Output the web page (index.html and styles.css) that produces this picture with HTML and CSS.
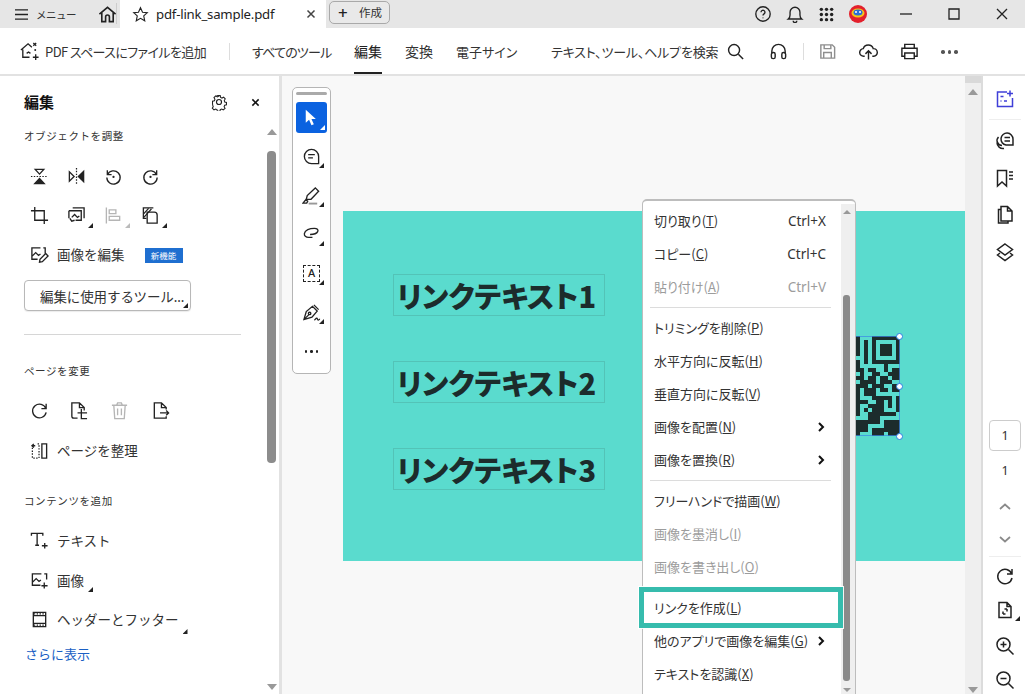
FILE: index.html
```html
<!DOCTYPE html>
<html lang="ja">
<head>
<meta charset="utf-8">
<title>pdf-link_sample.pdf</title>
<link rel="stylesheet" href="styles.css">
</head>
<body>
<div class="app">
  <header class="titlebar">
    <div class="tb-left">
      <svg class="ic menu-ic" viewBox="0 0 16 14"><path d="M1 2h14M1 7h14M1 12h14"/></svg>
      <span class="menu-label">メニュー</span>
      <svg class="ic home-ic" viewBox="0 0 20 20"><path d="M1.500 9.500 10 2.500l8.500 7M4 8v9.500h4v-5a2 2 0 0 1 4 0v5h4V8" /></svg>
    </div>
    <div class="tab">
      <svg class="ic star-ic" viewBox="0 0 20 20"><path d="m10 2 2.400 5.300 5.600.6-4.200 3.800 1.200 5.700L10 14.500l-5 2.900 1.200-5.700L2 7.900l5.600-.6z"/></svg>
      <span class="tab-name">pdf-link_sample.pdf</span>
      <svg class="ic tab-x" viewBox="0 0 10 10"><path d="m1.500 1.500 7 7m0-7-7 7"/></svg>
    </div>
    <div class="create"><span class="plus">+</span><span>作成</span></div>
    <div class="tb-right">
      <svg class="ic tr-ic" viewBox="0 0 20 20"><circle cx="10" cy="10" r="8"/><path d="M7.800 8a2.200 2.200 0 1 1 3.400 1.900c-.8.5-1.200 1-1.200 1.800"/><circle class="dot" cx="10" cy="14.300" r=".6"/></svg>
      <svg class="ic tr-ic" viewBox="0 0 20 20"><path d="M2.500 15.500c1.500-1.200 2-2.500 2-4.500V8a5.500 5.500 0 0 1 11 0v3c0 2 .5 3.300 2 4.500zM8 17.500a2 2 0 0 0 4 0"/></svg>
      <svg class="grid-ic" viewBox="0 0 16 16"><g><circle cx="2.500" cy="2.500" r="1.800"/><circle cx="8" cy="2.500" r="1.800"/><circle cx="13.500" cy="2.500" r="1.800"/><circle cx="2.500" cy="8" r="1.800"/><circle cx="8" cy="8" r="1.800"/><circle cx="13.500" cy="8" r="1.800"/><circle cx="2.500" cy="13.500" r="1.800"/><circle cx="8" cy="13.500" r="1.800"/><circle cx="13.500" cy="13.500" r="1.800"/></g></svg>
      <svg class="avatar" viewBox="0 0 18 18"><circle cx="9" cy="9" r="9" fill="#e3202c"/><ellipse cx="9" cy="8" rx="6.500" ry="4.500" fill="#f5c518"/><ellipse cx="9" cy="7.500" rx="4.500" ry="3" fill="#2a6fd6"/><circle cx="7" cy="7" r="1" fill="#fff"/><circle cx="11" cy="7" r="1" fill="#fff"/></svg>
    </div>
    <div class="win">
      <svg class="ic win-ic" viewBox="0 0 14 14"><path d="M1 7h12"/></svg>
      <svg class="ic win-ic" viewBox="0 0 14 14"><path d="M2 2h10v10H2z"/></svg>
      <svg class="ic win-ic" viewBox="0 0 14 14"><path d="m2 2 10 10m0-10L2 12"/></svg>
    </div>
  </header>

  <nav class="toolbar">
    <svg class="ic add-ic" viewBox="0 0 22 22"><path d="M2 9.500 9.500 3l4 3.500M4 9v8h7M8 13l2-1.500 2 1.500"/><path d="M15 2l1.500 1.500L15 5M18 2l-1.500 1.500L18 5M17.500 14v6M14.500 17h6"/><circle class="dot" cx="17" cy="9.500" r="1"/></svg>
    <span class="tool add-text">PDF スペースにファイルを追加</span>
    <span class="vsep first"></span>
    <span class="tool all">すべてのツール</span>
    <span class="tool tab-edit">編集</span>
    <span class="tool convert">変換</span>
    <span class="tool sign">電子サイン</span>
    <span class="tool search">テキスト、ツール、ヘルプを検索</span>
    <svg class="ic t-ic s-search" viewBox="0 0 20 20"><circle cx="8.500" cy="8.500" r="5.800"/><path d="m13 13 5 5"/></svg>
    <svg class="ic t-ic s-head" viewBox="0 0 20 20"><path d="M3 12V9.500a7 7 0 0 1 14 0V12"/><rect x="2.500" y="11" width="4" height="6.500" rx="1.800"/><rect x="13.500" y="11" width="4" height="6.500" rx="1.800"/></svg>
    <span class="vsep second"></span>
    <svg class="ic t-ic s-save" viewBox="0 0 20 20"><path d="M3 3h12l2.500 2.500V17H3zM6.500 3v4h7V3M6 17v-6h8v6"/></svg>
    <svg class="ic t-ic s-up" viewBox="0 0 20 20"><path d="M6 15H5a4 4 0 0 1-.5-8A5.500 5.500 0 0 1 15 7a4 4 0 0 1 .5 8H14M10 18.500V9.500M6.800 12.500 10 9.300l3.200 3.200"/></svg>
    <svg class="ic t-ic s-print" viewBox="0 0 20 20"><path d="M5 6V2.500h10V6M5 15H2V6.500h16V15h-3M5 11.500h10v6H5z"/></svg>
    <span class="more-dots s-more"><i></i><i></i><i></i></span>
  </nav>

  <main class="main">
    <aside class="panel">
      <div class="panel-body">
        <div class="panel-head">
          <h1 class="panel-title">編集</h1>
          <svg class="ic gear" viewBox="0 0 20 20"><circle cx="10" cy="10" r="2.800"/><path d="M8.500 2h3l.5 2.300 1.700.8 2-1.200 2 2.300-1.200 2 .6 1.800 2.100.6v2.800l-2.200.6-.7 1.800 1.200 2-2.200 2-2-1.200-1.700.7-.5 2.300h-3l-.6-2.300-1.700-.7-2 1.200-2.100-2.100 1.200-2-.7-1.700L2 11.800V9l2.300-.6.700-1.800-1.200-2 2.100-2.200 2 1.200 1.700-.8z" transform="translate(1 1) scale(.9)"/></svg>
          <svg class="ic close-x" viewBox="0 0 10 10"><path d="m1.500 1.500 7 7m0-7-7 7"/></svg>
        </div>

        <h2 class="sec-title obj">オブジェクトを調整</h2>
        <div class="icon-row r1">
          <span class="cell"><svg class="ic" viewBox="0 0 20 20"><path d="M5.500 2.500h9L10 7.500z"/><path class="fill" d="M5 17.500h10L10 12z"/><path class="dash" d="M1 10h18"/></svg></span>
          <span class="cell"><svg class="ic" viewBox="0 0 20 20"><path d="M2.500 5v10L7.500 10z"/><path class="fill" d="M17.500 4.500v11L12 10z"/><path class="dash" d="M10 1v18"/></svg></span>
          <span class="cell"><svg class="ic" viewBox="0 0 20 20"><path d="M3.500 3.500v4.500H8M3.700 8A7 7 0 1 1 3 11"/><circle class="dot" cx="10" cy="10.500" r="1.200"/></svg></span>
          <span class="cell"><svg class="ic" viewBox="0 0 20 20"><path d="M16.500 3.500v4.500H12M16.300 8A7 7 0 1 0 17 11"/><circle class="dot" cx="10" cy="10.500" r="1.200"/></svg></span>
        </div>
        <div class="icon-row r2">
          <span class="cell"><svg class="ic" viewBox="0 0 20 20"><path d="M5 1v14h14M1 5h14v14"/></svg></span>
          <span class="cell tri"><svg class="ic" viewBox="0 0 20 20"><path d="M6 2h12v11M2 5h13v10H9"/><path d="M2 5v8m3-1 3-3 3 3 2-1.500M3 13l2 3 3-1"/></svg></span>
          <span class="cell tri off"><svg class="ic" viewBox="0 0 20 20"><path d="M2.500 1.500v17M5.500 4h7v4h-7zM5.500 11h11v4h-11z"/></svg></span>
          <span class="cell tri"><svg class="ic" viewBox="0 0 20 20"><path d="M13 2H2.500v11h3M6.500 6.500H14a3 3 0 0 1 3 3V18H6.500z"/><path d="m3 8 5-5.500M3 12l8-9"/></svg></span>
        </div>
        <div class="text-row edit-row">
          <span class="cell"><svg class="ic" viewBox="0 0 20 20"><path d="M11 3H2v12h6m8-6V3h-2M2 12l4-4 3 3 2-1.500"/><path d="m10 18 .5-3 6-6 2.500 2.500-6 6z"/></svg></span>
          <span class="row-label">画像を編集</span>
          <span class="badge">新機能</span>
        </div>
        <button class="tool-btn">編集に使用するツール...</button>
        <hr class="rule">

        <h2 class="sec-title pg">ページを変更</h2>
        <div class="icon-row r3">
          <span class="cell"><svg class="ic" viewBox="0 0 20 20"><path d="M17 3v5h-5M16.700 8A7.200 7.200 0 1 0 17 12"/></svg></span>
          <span class="cell wide"><svg class="ic" viewBox="0 0 20 20"><path d="M9 18H5a2 2 0 0 1-2-2V2h8l5 5v3M11 2v5h5M9 12.500h10M13 8.500v10h6"/></svg></span>
          <span class="cell wide off"><svg class="ic" viewBox="0 0 20 20"><path d="M2 4.500h16M7 4.500 8 2h4l1 2.500M4 4.500 5 18.500h10l1-14M8 8v7M12 8v7"/></svg></span>
          <span class="cell wide"><svg class="ic" viewBox="0 0 20 20"><path d="M16 9V7l-5-5H3.500v16H16v-2M11 2v5h5M9.500 12.500h9M16 10l2.500 2.500L16 15"/></svg></span>
        </div>
        <div class="text-row org-row">
          <span class="cell"><svg class="ic" viewBox="0 0 20 20"><path class="dash" d="M2.500 7v11h7V3H7"/><path d="M12.500 3h5v15h-5zM2 5h3.500M4 3 2 5l2 2"/></svg></span>
          <span class="row-label">ページを整理</span>
        </div>

        <h2 class="sec-title add">コンテンツを追加</h2>
        <div class="text-row add-r1">
          <span class="cell"><svg class="ic" viewBox="0 0 20 20"><path d="M1.500 5V2.500h12V5M7.500 2.500V15M5.500 15h4M15.500 12.500v6M12.500 15.500h6"/></svg></span>
          <span class="row-label">テキスト</span>
        </div>
        <div class="text-row add-r2">
          <span class="cell"><svg class="ic" viewBox="0 0 20 20"><path d="M12 3H2.500v12H11M15 3h2.500v6M2.500 12l4-4 3 3 2-1.500M15 12v6.500M12 15.500h6.500"/></svg></span>
          <span class="row-label tri-label">画像</span>
        </div>
        <div class="text-row add-r3">
          <span class="cell"><svg class="ic" viewBox="0 0 20 20"><path d="M3.500 2.500h13v15h-13zM3.500 6h13M3.500 14h13"/><path class="dash" d="M4 4.200h12M4 15.800h12"/></svg></span>
          <span class="row-label tri-label long">ヘッダーとフッター</span>
        </div>
        <a class="more-link">さらに表示</a>
      </div>
      <div class="p-scroll">
        <span class="arrow-up"></span>
        <span class="p-thumb"></span>
        <span class="arrow-down"></span>
      </div>
    </aside>

    <section class="canvas">
      <div class="float-bar">
        <span class="grip"></span>
        <span class="fb selected tri-w"><svg viewBox="0 0 16 16" class="cursor"><path d="M4 1.500v11l2.800-2.600 2 4.600 2-.9-2-4.400h3.700z"/></svg></span>
        <span class="fb tri"><svg class="ic" viewBox="0 0 20 20"><path d="M17.500 17.500H10a7.500 7.500 0 1 1 7.500-7.500zM6.500 8h7M6.500 11.500h5"/></svg></span>
        <span class="fb tri"><svg class="ic" viewBox="0 0 20 20"><path d="m4.500 14 1-4L14 2l3.500 3.500-8 8.500zM1 18l3-3.500 2 1.500-1 2z"/><path class="soft" d="M7 18.500h9"/></svg></span>
        <span class="fb tri"><svg class="ic" viewBox="0 0 20 20"><path d="M11 13H7c-3 0-4.800-1.500-4.500-4C3 5.500 8 3.500 13 3.500c3 0 4.500 1.500 3.500 3.500-1 2-4 3-8 3"/></svg></span>
        <span class="fb tri"><span class="a-box">A</span></span>
        <span class="fb tri"><svg class="ic" viewBox="0 0 20 20"><path d="M2 17.500 4.500 9 11 3.500l5 5L10.500 15zM2 17.500l5-5M12.500 2l5 5M13 18c1-.5 1.500-2 2.500-2s.5 2 1.500 2 1-1 2-1"/><circle cx="8" cy="11" r="1.300"/></svg></span>
        <span class="fb"><span class="more-dots small"><i></i><i></i><i></i></span></span>
      </div>

      <div class="page">
        <div class="link-box"><span>リンクテキスト1</span></div>
        <div class="link-box"><span>リンクテキスト2</span></div>
        <div class="link-box"><span>リンクテキスト3</span></div>
        <svg class="qr" viewBox="0 0 25 25" shape-rendering="crispEdges"><path d="M14 0h1v5h-1zM16 1h1v6h-1zM18 0h7v7h-7zM19 1v5h5V1zM20 2h3v3h-3zM14 6h1v2h-1zM14 8h2v1h-2zM17 8h2v1h-2zM21 7h1v2h-1zM23 8h2v1h-2zM15 9h1v3h-1zM18 9h2v1h-2zM22 9h3v1h-3zM14 10h1v1h-1zM17 10h2v2h-2zM20 10h2v1h-2zM23 10h2v1h-2zM16 11h1v1h-1zM20 11h3v1h-3zM14 12h3v1h-3zM18 12h3v1h-3zM23 12h2v2h-2zM14 13h1v2h-1zM16 13h3v2h-3zM20 13h2v1h-2zM18 15h5v1h-5zM14 15h1v1h-1zM14 16h3v5h-3zM15 17v3h4v-3zM16 18h2v1h-2zM19 16h2v3h-2zM22 16h1v2h-1zM24 15h1v4h-1zM19 19h5v1h-5zM14 20h6v2h-6zM21 21h4v3h-4zM14 22h3v2h-3zM18 23h3v2h-3zM14 24h1v1h-1zM22 24h3v1h-3z" fill-rule="evenodd"/></svg>
        <span class="qr-sel"></span>
        <span class="handle h1"></span>
        <span class="handle h2"></span>
        <span class="handle h3"></span>
      </div>

      <div class="c-scroll">
        <span class="c-thumb"></span>
        <span class="arrow-up"></span>
        <span class="arrow-down"></span>
      </div>

      <div class="ctx">
        <div class="ctx-list">
          <div class="mi"><span>切り取り(<u>T</u>)</span><span class="key">Ctrl+X</span></div>
          <div class="mi"><span>コピー(<u>C</u>)</span><span class="key">Ctrl+C</span></div>
          <div class="mi dis"><span>貼り付け(<u>A</u>)</span><span class="key">Ctrl+V</span></div>
          <hr class="msep">
          <div class="mi"><span>トリミングを削除(<u>P</u>)</span></div>
          <div class="mi"><span>水平方向に反転(<u>H</u>)</span></div>
          <div class="mi"><span>垂直方向に反転(<u>V</u>)</span></div>
          <div class="mi"><span>画像を配置(<u>N</u>)</span><svg class="chev" viewBox="0 0 8 12"><path d="m2 2 4 4-4 4"/></svg></div>
          <div class="mi"><span>画像を置換(<u>R</u>)</span><svg class="chev" viewBox="0 0 8 12"><path d="m2 2 4 4-4 4"/></svg></div>
          <hr class="msep">
          <div class="mi"><span>フリーハンドで描画(<u>W</u>)</span></div>
          <div class="mi dis"><span>画像を墨消し(<u>I</u>)</span></div>
          <div class="mi dis"><span>画像を書き出し(<u>O</u>)</span></div>
          <hr class="msep">
          <div class="mi"><span>リンクを作成(<u>L</u>)</span></div>
          <div class="mi"><span>他のアプリで画像を編集(<u>G</u>)</span><svg class="chev" viewBox="0 0 8 12"><path d="m2 2 4 4-4 4"/></svg></div>
          <div class="mi"><span>テキストを認識(<u>X</u>)</span></div>
        </div>
        <div class="ctx-scroll">
          <span class="arrow-up small"></span>
          <span class="ctx-thumb"></span>
          <span class="arrow-down small"></span>
        </div>
      </div>
      <div class="callout"></div>
    </section>

    <aside class="rail">
      <svg class="ic rail-ic active" viewBox="0 0 20 20"><path d="M12 3H2.500v14.500h15V9"/><path d="M5.500 7.500h3M5.500 12h1M9 12h3"/><path d="M15 1.500v6M12 4.500h6" /></svg>
      <span class="rail-sep"></span>
      <svg class="ic rail-ic" viewBox="0 0 20 20"><path d="M18 14h-7a6 6 0 1 1 7-6zM7 14.500A5 5 0 0 1 3.500 6M9 17.500a6 6 0 0 1-7-6M9.500 6.500H15M9.500 10H15"/></svg>
      <svg class="ic rail-ic" viewBox="0 0 20 20"><path d="M2.500 2.500h9V18L7 14l-4.500 4zM14 4h4M14 7.500h4M14 11h4"/></svg>
      <svg class="ic rail-ic" viewBox="0 0 20 20"><path d="M6 4.500H3.500v13.500H13v-2M6 1.500h6.500l4.500 4.500v10H6zM12.500 1.500V6H17"/></svg>
      <svg class="ic rail-ic" viewBox="0 0 20 20"><path d="m10 2 7.500 5.500L10 13 2.500 7.500zM5 11l-2.500 2L10 18.500l7.500-5.500L15 11"/></svg>
      <span class="rail-gap"></span>
      <span class="page-input">1</span>
      <span class="page-total">1</span>
      <svg class="ic rail-chev" viewBox="0 0 14 10"><path d="m2 7 5-4.500L12 7"/></svg>
      <svg class="ic rail-chev" viewBox="0 0 14 10"><path d="m2 3 5 4.500L12 3"/></svg>
      <span class="rail-sep low"></span>
      <svg class="ic rail-ic r-rot" viewBox="0 0 20 20"><path d="M17 3v5h-5M16.700 8A7.200 7.200 0 1 0 17 12"/></svg>
      <span class="rail-tri tri"><svg class="ic rail-ic r-fit" viewBox="0 0 20 20"><path d="M4 2.500h8l4 4v11H4zM12 2.500v4h4M8 14v-2.500M8 14h2.500M12 9v2.500M12 9H9.500"/></svg></span>
      <svg class="ic rail-ic r-zoom" viewBox="0 0 20 20"><circle cx="8.500" cy="8.500" r="6.500"/><path d="m13.500 13.500 5 5M5.500 8.500h6M8.500 5.500v6"/></svg>
      <svg class="ic rail-ic r-zoom" viewBox="0 0 20 20"><circle cx="8.500" cy="8.500" r="6.500"/><path d="m13.500 13.500 5 5M5.500 8.500h6"/></svg>
    </aside>
  </main>
</div>
</body>
</html>
```

FILE: styles.css
```css
* { box-sizing: border-box; }
html, body { margin: 0; padding: 0; }
body {
  width: 1025px;
  height: 694px;
  overflow: hidden;
  background: #fff;
  color: #222;
  font-family: "Noto Sans", "Noto Sans CJK JP", sans-serif;
}
.app { display: flex; flex-direction: column; height: 694px; }
.ic { fill: none; stroke: currentColor; stroke-width: 1.5; display: block; flex: none; width: 20px; height: 20px; }
.ic .dot { fill: currentColor; stroke: none; }
.ic .fill { fill: currentColor; }
.ic .dash { stroke-dasharray: 1.500 1.500; stroke-width: 1.300; }
.ic .soft { stroke: #999; stroke-width: 2; }

/* title bar */
.titlebar { height: 28px; background: #e6e6e6; display: flex; align-items: center; flex: none; }
.tb-left { width: 120px; height: 28px; display: flex; align-items: center; padding-left: 14px; border-right: 0; position: relative; }
.menu-ic { width: 15px; height: 13px; }
.menu-label { font-size: 10.500px; margin-left: 7px; color: #333; letter-spacing: -.5px; }
.home-ic { margin-left: 22px; width: 19px; height: 19px; stroke-width: 1.700; }
.tb-left::after { content: ""; position: absolute; left: 116px; top: 3px; height: 21px; width: 1px; background: #ccc; }
.tab { width: 206px; height: 28px; background: #fff; display: flex; align-items: center; padding-left: 12px; }
.star-ic { width: 17px; height: 17px; stroke-width: 1.300; }
.tab-name { font-size: 13.200px; letter-spacing: -.2px; margin-left: 7px; width: 150px; color: #222; }
.tab-x { width: 10px; height: 10px; color: #444; }
.create { margin-left: 3px; width: 61px; height: 23px; margin-top: -4px; border: 1px solid #a9a9a9; border-radius: 5px; display: flex; align-items: center; padding-left: 8px; font-size: 11.500px; color: #333; background: #e9e9e9; }
.plus { font-size: 17px; font-weight: 500; width: 21px; line-height: 1; color: #222; }
.tb-right { margin-left: auto; display: flex; align-items: center; gap: 14px; }
.tr-ic { width: 18px; height: 18px; }
.grid-ic { width: 15px; height: 15px; fill: #222; margin: 0 1px; display: block; }
.avatar { width: 18px; height: 18px; display: block; margin-left: 0; }
.win { display: flex; margin-left: 32px; gap: 34px; padding-right: 16px; }
.win-ic { width: 14px; height: 14px; stroke-width: 1.300; }

/* toolbar */
.toolbar { height: 48px; flex: none; background: #fff; border-bottom: 2px solid #e2e2e2; position: relative; display: flex; align-items: center; }
.tool { position: absolute; top: 14px; font-size: 13px; line-height: 19px; color: #333; white-space: nowrap; font-feature-settings: "palt"; font-family: "Noto Sans CJK JP", sans-serif; }
.add-ic { position: absolute; left: 19px; top: 13px; width: 21px; height: 21px; stroke-width: 1.400; }
.add-text { left: 45px; letter-spacing: -.6px; }
.vsep { position: absolute; top: 15px; width: 1px; height: 17px; background: #ddd; }
.vsep.first { left: 229px; }
.vsep.second { left: 803px; }
.all { left: 252px; letter-spacing: -.8px; }
.tab-edit { left: 354px; height: 32px; width: 28px; border-bottom: 2px solid #222; color: #222; font-size: 14px; }
.convert { left: 405px; font-size: 14px; }
.sign { left: 456px; }
.search { left: 551px; letter-spacing: -.2px; }
.t-ic { position: absolute; top: 14px; width: 19px; height: 19px; }
.s-search { left: 726px; }
.s-head { left: 769px; }
.s-save { left: 818px; color: #8e8e8e; }
.s-up { left: 859px; }
.s-print { left: 900px; }
.more-dots { display: flex; gap: 3px; }
.more-dots i { width: 3.500px; height: 3.500px; border-radius: 50%; background: #555; }
.s-more { position: absolute; left: 941px; top: 22px; }
.more-dots.small { gap: 3px; }
.more-dots.small i { width: 2.500px; height: 2.500px; background: #222; }

/* main */
.main { flex: 1; display: flex; min-height: 0; }

/* side panel */
.panel { width: 282px; flex: none; display: flex; border-right: 3px solid #e2e2e2; background: #fff; }
.panel-body { width: 267px; flex: none; padding: 0 0 0 24px; }
.panel-head { display: flex; align-items: center; height: 20px; margin-top: 16px; }
.panel-title { margin: 0; font-size: 15px; font-weight: 700; line-height: 20px; width: 186px; color: #111; }
.gear { width: 18px; height: 18px; margin-left: 0; stroke-width: 1.300; }
.close-x { width: 9px; height: 9px; margin-left: 23px; stroke-width: 1.700; color: #111; }
.sec-title { margin: 0; font-size: 10.500px; font-weight: 400; line-height: 16px; letter-spacing: .6px; color: #333; }
.sec-title.obj { margin-top: 16px; }
.sec-title.pg { margin-top: 28px; }
.sec-title.add { margin-top: 32px; }
.icon-row { display: flex; margin-left: -3px; }
.cell { position: relative; width: 37px; height: 20px; display: flex; justify-content: center; color: #222; flex: none; }
.cell .ic { width: 19px; height: 19px; stroke-width: 1.400; }
.cell.off { color: #b5b5b5; }
.cell.wide { width: 41px; }
.tri::after { content: ""; position: absolute; width: 5px; height: 5px; background: #222; clip-path: polygon(100% 0, 100% 100%, 0 100%); right: 2px; bottom: -2px; }
.cell.off.tri::after { background: #bbb; }
.r1 { margin-top: 23px; }
.r2 { margin-top: 19px; }
.r3 { margin-top: 22px; }
.text-row { display: flex; align-items: center; margin-left: -3px; height: 20px; }
.row-label { font-size: 13.500px; color: #333; margin-left: 0; letter-spacing: 0; position: relative; white-space: nowrap; line-height: 20px; }
.text-row .cell { width: 36px; }
.edit-row { margin-top: 19px; }
.org-row { margin-top: 20px; }
.add-r1 { margin-top: 22px; }
.add-r2 { margin-top: 20px; }
.add-r3 { margin-top: 19px; }
.badge { margin-left: 20px; width: 38px; height: 15px; background: #1f6fd0; color: #fff; font-size: 8.500px; line-height: 15px; text-align: center; }
.tool-btn { display: block; margin-top: 15px; width: 167px; height: 31px; border: 1px solid #b8b8b8; border-radius: 4px; background: #fff; padding: 0 0 0 15px; text-align: left; font: inherit; font-size: 13.500px; color: #333; position: relative; white-space: nowrap; box-shadow: 0 1px 1px rgba(0,0,0,.08); letter-spacing: -.1px; }
.tool-btn::after { content: ""; position: absolute; width: 5px; height: 5px; background: #222; clip-path: polygon(100% 0, 100% 100%, 0 100%); right: 2px; bottom: 2px; }
.rule { margin: 23px 0 0; border: 0; border-top: 1px solid #d6d6d6; width: 217px; }
.tri-label::after { content: ""; position: absolute; width: 5px; height: 5px; background: #222; clip-path: polygon(100% 0, 100% 100%, 0 100%); right: -9px; bottom: -1px; }
.tri-label.long::after { right: -9px; bottom: -4px; }
.more-link { display: block; margin-top: 15px; font-size: 13px; line-height: 18px; color: #1a5fc4; margin-left: 1px; }
.p-scroll { width: 12px; flex: none; position: relative; }
.p-thumb { position: absolute; left: 0; top: 75px; width: 9px; height: 312px; background: #8c8c8c; border-radius: 4px; }
.arrow-up, .arrow-down { position: absolute; width: 0; height: 0; border-left: 5px solid transparent; border-right: 5px solid transparent; }
.arrow-up { border-bottom: 6px solid #999; }
.arrow-down { border-top: 6px solid #999; }
.p-scroll .arrow-up { left: 0; top: 53px; }
.p-scroll .arrow-down { left: 0; top: 608px; }

/* canvas */
.canvas { flex: 1; position: relative; background: #f8f8f8; }
.float-bar { position: absolute; left: 10px; top: 11px; width: 39px; height: 287px; background: #fff; border: 1px solid #b5b5b5; border-radius: 5px; display: flex; flex-direction: column; align-items: center; padding: 4px 0 0; }
.grip { width: 31px; height: 3px; background: #aaa; border-radius: 2px; margin-bottom: 7px; flex: none; }
.fb { position: relative; width: 31px; height: 31px; margin-bottom: 8px; display: flex; align-items: center; justify-content: center; flex: none; color: #222; }
.fb .ic { width: 19px; height: 19px; stroke-width: 1.400; }
.fb.selected { background: #0b62e0; border-radius: 3px; }
.cursor { width: 19px; height: 19px; fill: #fff; display: block; margin-left: -3px; margin-top: -1px; }
.tri-w::after { content: ""; position: absolute; width: 5px; height: 5px; background: #fff; clip-path: polygon(100% 0, 100% 100%, 0 100%); right: 2px; bottom: 3px; }
.fb.tri::after { right: 3px; bottom: 4px; }
.a-box { width: 17px; height: 17px; border: 1.500px dashed #222; font-size: 11px; line-height: 14px; text-align: center; font-weight: 500; }
.page { position: absolute; left: 61px; top: 135px; width: 622px; height: 350px; background: #5adbce; padding: 63px 0 0 50px; display: flex; flex-direction: column; gap: 45px; }
.link-box { width: 212px; height: 42px; border: 1px solid rgba(60,110,105,.22); display: flex; align-items: center; padding-left: 3px; }
.link-box span { font-family: "Noto Sans CJK JP", sans-serif; font-size: 29px; font-weight: 900; color: #1c2c2c; white-space: nowrap; line-height: 40px; font-feature-settings: "palt"; }
.qr { position: absolute; left: 457px; top: 125px; width: 100px; height: 100px; fill: #1c2c2c; display: block; }
.qr-sel { position: absolute; left: 457px; top: 125px; width: 100px; height: 100px; border: 1px solid rgba(59,136,232,.7); }
.handle { position: absolute; left: 553px; width: 7px; height: 7px; border-radius: 50%; background: #fff; border: 1px solid #2b7de0; }
.h1 { top: 122px; }
.h2 { top: 172px; }
.h3 { top: 222px; }
.c-scroll { position: absolute; right: 0; top: 0; bottom: 0; width: 18px; background: #efefef; border-right: 2px solid #dcdcdc; }
.c-thumb { position: absolute; left: 0; top: 0; width: 16px; height: 7px; background: #d9d9d9; }
.c-scroll .arrow-up { left: 3px; top: 13px; }
.c-scroll .arrow-down { left: 3px; top: 611px; }

/* context menu */
.ctx { position: absolute; left: 360px; top: 123px; width: 214px; height: 510px; background: #fff; border: 1px solid #bdbdbd; border-top-width: 2px; border-radius: 5px 5px 0 0; display: flex; }
.ctx-list { width: 198px; flex: none; padding: 3px 0 0 0; }
.mi { height: 33px; padding: 0 0 0 11px; margin-right: 15px; display: flex; align-items: center; justify-content: space-between; font-size: 13px; color: #333; white-space: nowrap; font-family: "Noto Sans CJK JP", "Noto Sans", sans-serif; font-feature-settings: "palt"; }
.mi u { text-underline-offset: 1px; }
.mi.dis { color: #9c9c9c; }
.key { font-family: "Noto Sans", sans-serif; font-size: 13.500px; letter-spacing: 0; }
.msep { margin: 4px 10px 3px 7px; border: 0; border-top: 1px solid #dcdcdc; height: 1px; }
.chev { width: 8px; height: 12px; fill: none; stroke: #111; stroke-width: 2; display: block; margin-right: 1px; }
.ctx-scroll { flex: 1; background: #efefef; position: relative; margin-top: 3px; }
.ctx-thumb { position: absolute; left: 2px; top: 91px; width: 7px; height: 386px; background: #8a8a8a; border-radius: 3px; }
.arrow-up.small { left: 2px; top: 6px; border-left-width: 4px; border-right-width: 4px; border-bottom-width: 4px; }
.arrow-down.small { left: 2px; top: 484px; border-left-width: 4px; border-right-width: 4px; border-top-width: 4px; }
.callout { position: absolute; left: 357px; top: 511px; width: 204px; height: 41px; border: 5px solid #36bcad; box-shadow: 0 0 0 1px rgba(255,255,255,.9); }

/* right rail */
.rail { width: 42px; flex: none; background: #fff; display: flex; flex-direction: column; align-items: center; position: relative; padding: 13px 0 0 2px; }
.rail-ic { width: 20px; height: 20px; color: #222; }
.rail-ic.active { color: #3f3fd8; }
.rail-sep { display: block; width: 32px; height: 1px; background: #eee; margin: 10px 0 11px; flex: none; }
.rail-ic + .rail-ic { margin-top: 17px; }
.rail-gap { height: 158px; flex: none; }
.page-input { width: 32px; height: 31px; border: 1px solid #ccc; border-radius: 4px; font-size: 12.500px; line-height: 29px; text-align: center; color: #333; flex: none; }
.page-total { font-size: 12.500px; line-height: 18px; margin-top: 11px; color: #333; flex: none; }
.rail-chev { width: 14px; height: 10px; color: #8a8a8a; margin-top: 22px; stroke-width: 1.700; }
.rail-chev + .rail-chev { margin-top: 22px; }
.rail-sep.low { margin: 12px 0 9px; }
.r-rot { margin-top: 0; }
.rail-tri { position: relative; display: block; margin-top: 14px; flex: none; }
.rail-tri.tri::after { right: -5px; bottom: -1px; }
.rail-tri + .r-zoom { margin-top: 16px; }
.r-zoom + .r-zoom { margin-top: 14px; }
```
